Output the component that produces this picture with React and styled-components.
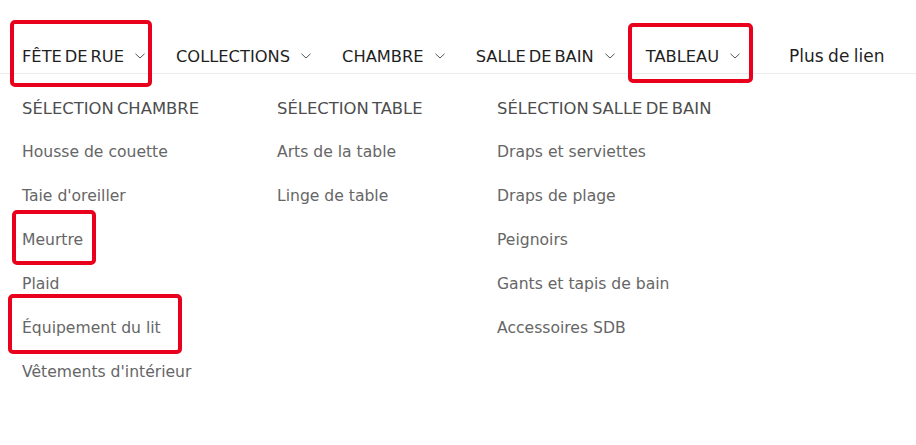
import React from "react";
import styled, { createGlobalStyle } from "styled-components";

const Global = createGlobalStyle`
  html, body { margin: 0; padding: 0; background: #fff; }
  body { font-family: "DejaVu Sans", "Liberation Sans", sans-serif; }
`;

const Page = styled.div`
  position: relative;
  width: 916px;
  height: 445px;
  overflow: hidden;
  background: #fff;
`;

const Nav = styled.nav`
  display: flex;
  align-items: center;
  gap: 31px;
  box-sizing: border-box;
  height: 74px;
  padding: 42px 0 3px 22px;
  border-bottom: 1px solid #ececec;
`;

const NavItem = styled.div`
  display: flex;
  align-items: center;
  gap: 11px;
  height: 28px;
  font-size: ${(p) => (p.$plain ? "17px" : "16.3px")};
  font-weight: 400;
  word-spacing: ${(p) => (p.$plain ? "-1px" : "-2.3px")};
  color: #1f1f1f;
  text-transform: ${(p) => (p.$plain ? "none" : "uppercase")};
  white-space: nowrap;
  margin-left: ${(p) => (p.$plain ? "18px" : "0")};
`;

const Chevron = () => (
  <svg width="10" height="6" viewBox="0 0 10 6" fill="none">
    <path d="M0.5 0.8 L5 5 L9.5 0.8" stroke="#555" strokeWidth="1" />
  </svg>
);

const Dropdown = styled.div`
  display: grid;
  grid-template-columns: 255px 220px 1fr;
  padding: 12px 0 0 22px;
`;

const Column = styled.ul`
  list-style: none;
  margin: 0;
  padding: 0;
`;

const Heading = styled.li`
  height: 44px;
  display: flex;
  align-items: center;
  font-size: 16.4px;
  word-spacing: -2px;
  color: #4d4d4d;
  text-transform: uppercase;
  white-space: nowrap;
`;

const Item = styled.li`
  height: 44px;
  display: flex;
  align-items: center;
  font-size: 15.6px;
  color: #666;
  white-space: nowrap;
`;

const Mark = styled.div`
  position: absolute;
  box-sizing: border-box;
  border: 4px solid #e8001d;
  border-radius: 5px;
  pointer-events: none;
`;

const nav = [
  { label: "Fête de rue", chevron: true },
  { label: "Collections", chevron: true },
  { label: "Chambre", chevron: true },
  { label: "Salle de bain", chevron: true },
  { label: "Tableau", chevron: true },
];

const columns = [
  {
    title: "Sélection chambre",
    items: [
      "Housse de couette",
      "Taie d'oreiller",
      "Meurtre",
      "Plaid",
      "Équipement du lit",
      "Vêtements d'intérieur",
    ],
  },
  { title: "Sélection table", items: ["Arts de la table", "Linge de table"] },
  {
    title: "Sélection salle de bain",
    items: [
      "Draps et serviettes",
      "Draps de plage",
      "Peignoirs",
      "Gants et tapis de bain",
      "Accessoires SDB",
    ],
  },
];

const marks = [
  { left: 10, top: 20, width: 142, height: 67 },
  { left: 628, top: 23, width: 125, height: 60 },
  { left: 12, top: 210, width: 84, height: 55 },
  { left: 8, top: 294, width: 174, height: 60 },
];

export default function App() {
  return (
    <>
      <Global />
      <Page>
        <Nav>
          {nav.map((n) => (
            <NavItem key={n.label}>
              {n.label}
              <Chevron />
            </NavItem>
          ))}
          <NavItem $plain>Plus de lien</NavItem>
        </Nav>
        <Dropdown>
          {columns.map((c) => (
            <Column key={c.title}>
              <Heading>{c.title}</Heading>
              {c.items.map((i) => (
                <Item key={i}>{i}</Item>
              ))}
            </Column>
          ))}
        </Dropdown>
        {marks.map((m, i) => (
          <Mark key={i} style={m} />
        ))}
      </Page>
    </>
  );
}
